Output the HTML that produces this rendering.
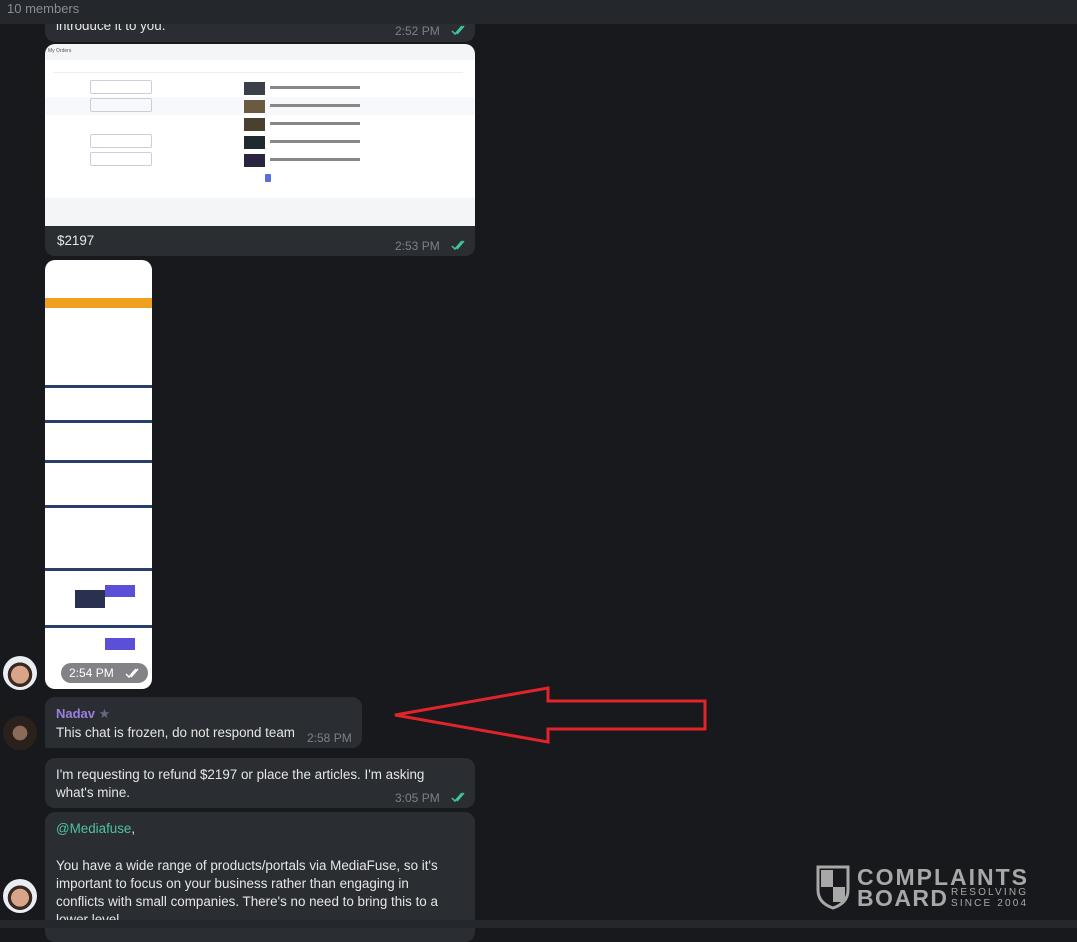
<!DOCTYPE html>
<html><head><style>
body{margin:0;width:1077px;height:928px;background:#17191d;font-family:"Liberation Sans",sans-serif;position:relative;overflow:hidden;color:#e8e8e8}
.hdr{position:absolute;left:0;top:0;width:1077px;height:24px;background:#24272b;color:#8a8d92;font-size:13px;line-height:18px;padding-left:7px;box-sizing:border-box;z-index:5}
.b{position:absolute;left:45px;background:#2a2d32;border-radius:10px}
.t{position:absolute;font-size:13.4px;color:#e6e6e6}
.tm{position:absolute;font-size:12px;color:#7d8187}
.av{position:absolute;left:3px;width:34px;height:34px;border-radius:50%;background:radial-gradient(circle at 50% 55%,#d9a58a 0 35%,#3a2a22 36% 48%,#e9eef3 49%)}
</style></head><body>
<div class="hdr">10 members</div>
<svg width="0" height="0" style="position:absolute"><defs><g id="ck"><path d="M1,7 L4,10 L11,2 M6,10 L13,2" fill="none" stroke-width="1.5"/></g></defs></svg>

<div class="b" style="top:-10px;width:430px;height:52px"></div>
<div class="t" style="left:56px;top:18px">introduce it to you.</div>
<div class="tm" style="left:395px;top:24px">2:52 PM</div>
<svg style="position:absolute;left:451px;top:24px" width="16" height="12"><use href="#ck" stroke="#3fc79a"/></svg>

<div class="b" style="top:44px;width:430px;height:212px;overflow:hidden">
 <div style="position:absolute;left:0;top:0;width:430px;height:182px;background:#f4f5f7"></div>
 <div style="position:absolute;left:0;top:16px;width:430px;height:138px;background:#fff"></div>
 <div style="position:absolute;left:3px;top:4px;font-size:5px;color:#555">My Orders</div>
 <div style="position:absolute;left:8px;top:28px;width:410px;height:1px;background:#eee"></div>
 <div style="position:absolute;left:0;top:53px;width:430px;height:18px;background:#f6f8fb"></div>
 <div style="position:absolute;left:45px;top:36px;width:60px;height:12px;border:1px solid #ccd;border-radius:2px"></div>
 <div style="position:absolute;left:45px;top:54px;width:60px;height:12px;border:1px solid #ccd;border-radius:2px"></div>
 <div style="position:absolute;left:45px;top:90px;width:60px;height:12px;border:1px solid #ccd;border-radius:2px"></div>
 <div style="position:absolute;left:45px;top:108px;width:60px;height:12px;border:1px solid #ccd;border-radius:2px"></div>
 <div style="position:absolute;left:199px;top:38px;width:21px;height:13px;background:#3a3f4a"></div>
 <div style="position:absolute;left:199px;top:56px;width:21px;height:13px;background:#6a5a40"></div>
 <div style="position:absolute;left:199px;top:74px;width:21px;height:13px;background:#4a4030"></div>
 <div style="position:absolute;left:199px;top:92px;width:21px;height:13px;background:#1e2a30"></div>
 <div style="position:absolute;left:199px;top:110px;width:21px;height:13px;background:#2a2440"></div>
 <div style="position:absolute;left:225px;top:42px;width:90px;height:3px;background:#888"></div>
 <div style="position:absolute;left:225px;top:60px;width:90px;height:3px;background:#888"></div>
 <div style="position:absolute;left:225px;top:78px;width:90px;height:3px;background:#888"></div>
 <div style="position:absolute;left:225px;top:96px;width:90px;height:3px;background:#888"></div>
 <div style="position:absolute;left:225px;top:114px;width:90px;height:3px;background:#888"></div>
 <div style="position:absolute;left:220px;top:130px;width:6px;height:8px;background:#5b6ee0;border-radius:1px"></div>
 <div style="position:absolute;left:0;top:182px;width:430px;height:30px;background:#2a2d32"></div>
 <div class="t" style="left:12px;top:189px">$2197</div>
 <div class="tm" style="left:350px;top:195px">2:53 PM</div>
 <svg style="position:absolute;left:406px;top:195px" width="16" height="12"><use href="#ck" stroke="#3fc79a"/></svg>
</div>

<div style="position:absolute;left:45px;top:260px;width:107px;height:429px;background:#fff;border-radius:10px;overflow:hidden">
 <div style="position:absolute;left:0;top:38px;width:107px;height:10px;background:#f0a020"></div>
 <div style="position:absolute;left:0;top:125px;width:107px;height:3px;background:#2a3e6a"></div>
 <div style="position:absolute;left:0;top:160px;width:107px;height:3px;background:#2a3e6a"></div>
 <div style="position:absolute;left:0;top:200px;width:107px;height:3px;background:#2a3e6a"></div>
 <div style="position:absolute;left:0;top:245px;width:107px;height:3px;background:#2a3e6a"></div>
 <div style="position:absolute;left:0;top:308px;width:107px;height:3px;background:#2a3e6a"></div>
 <div style="position:absolute;left:30px;top:330px;width:30px;height:18px;background:#2a3050"></div>
 <div style="position:absolute;left:60px;top:325px;width:30px;height:12px;background:#5b4fd8"></div>
 <div style="position:absolute;left:0;top:365px;width:107px;height:3px;background:#2a3e6a"></div>
 <div style="position:absolute;left:60px;top:378px;width:30px;height:12px;background:#5b4fd8"></div>
 <div style="position:absolute;left:16px;top:403px;width:87px;height:20px;border-radius:10px;background:rgba(90,90,95,.75);color:#fff;font-size:12px;line-height:20px;padding-left:8px;box-sizing:border-box">2:54 PM</div>
 <svg style="position:absolute;left:80px;top:407px" width="16" height="12"><use href="#ck" stroke="#fff"/></svg>
</div>
<div class="av" style="top:656px"></div>

<div class="av" style="top:716px;background:radial-gradient(circle at 50% 50%,#8a6a58 0 30%,#2a211c 31%)"></div>
<div class="b" style="top:697px;width:317px;height:51px;border-bottom-left-radius:2px"></div>
<div style="position:absolute;left:56px;top:706px;font-size:13px;font-weight:bold;color:#9b80e0">Nadav <span style="color:#666a80;font-weight:normal">★</span></div>
<div class="t" style="left:56px;top:725px">This chat is frozen, do not respond team</div>
<div class="tm" style="left:307px;top:731px">2:58 PM</div>

<div class="b" style="top:758px;width:430px;height:50px"></div>
<div class="t" style="left:56px;top:767px">I'm requesting to refund $2197 or place the articles. I'm asking</div>
<div class="t" style="left:56px;top:785px">what's mine.</div>
<div class="tm" style="left:395px;top:791px">3:05 PM</div>
<svg style="position:absolute;left:451px;top:791px" width="16" height="12"><use href="#ck" stroke="#3fc79a"/></svg>

<div class="b" style="top:812px;width:430px;height:130px"></div>
<div class="t" style="left:56px;top:821px;color:#4ec3a0">@Mediafuse<span style="color:#e6e6e6">,</span></div>
<div class="t" style="left:56px;top:857px;line-height:18px">You have a wide range of products/portals via MediaFuse, so it's<br>important to focus on your business rather than engaging in<br>conflicts with small companies. There's no need to bring this to a<br>lower level.</div>
<div class="av" style="top:879px"></div>
<div style="position:absolute;left:0;top:920px;width:1077px;height:8px;background:#24272b;z-index:5"></div>

<svg style="position:absolute;left:0;top:0" width="1077" height="928">
<polygon points="395,715 548,688 548,701 705,701 705,729 548,729 548,742" fill="none" stroke="#e0242a" stroke-width="3"/>
<path d="M818,867 L848,867 L848,890 Q848,903 833,908 Q818,903 818,890 Z" fill="none" stroke="#a8a8a8" stroke-width="3"/>
<rect x="821" y="870" width="12" height="17" fill="#a8a8a8"/><rect x="833" y="887" width="12" height="15" fill="#a8a8a8"/>
<text x="857" y="885" font-family="Liberation Sans" font-weight="bold" font-size="23" fill="#a8a8a8" textLength="170">COMPLAINTS</text>
<text x="857" y="906" font-family="Liberation Sans" font-weight="bold" font-size="23" fill="#a8a8a8" textLength="90">BOARD</text>
<text x="951" y="895" font-family="Liberation Sans" font-size="10" fill="#a8a8a8" textLength="75">RESOLVING</text>
<text x="951" y="906" font-family="Liberation Sans" font-size="10" fill="#a8a8a8" textLength="75">SINCE 2004</text>
</svg>
</body></html>
